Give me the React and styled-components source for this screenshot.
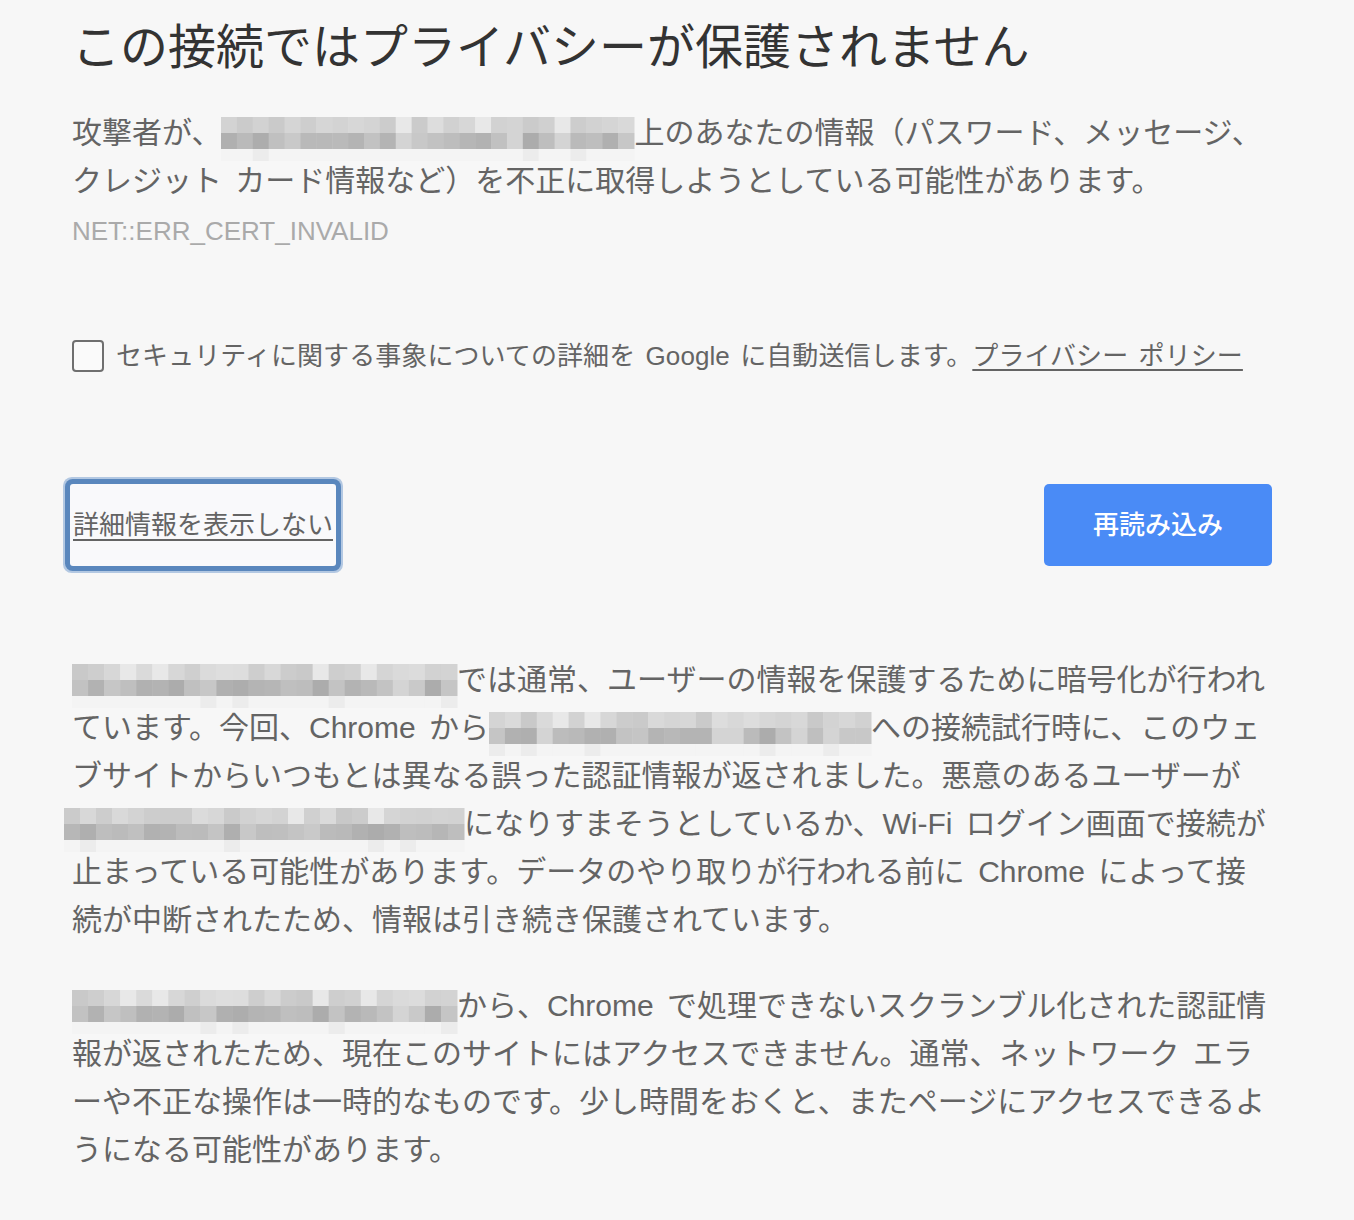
import React from 'react';
import styled, { createGlobalStyle } from 'styled-components';

const GlobalStyle = createGlobalStyle`
  html, body {
    margin: 0;
    padding: 0;
    background: #f7f7f7;
  }
  body {
    font-family: "Liberation Sans", "Noto Sans CJK JP", sans-serif;
    color: #646464;
  }
`;

const Page = styled.div`
  width: 1200px;
  margin-left: 72px;
  padding-top: 18px;
  padding-bottom: 46px;
  line-break: normal;
`;

const Heading = styled.h1`
  margin: 0;
  font-size: 48px;
  line-height: 60px;
  font-weight: normal;
  color: #333;
`;

const Paragraph = styled.p`
  margin: ${p => p.$top || 0}px 0 0;
  font-size: 30px;
  line-height: 48px;
  word-spacing: 5px;
`;

const ErrorCode = styled.div`
  margin-top: 2px;
  font-size: 26px;
  line-height: 48px;
  color: #aaaaaa;
`;

const CheckRow = styled.label`
  display: flex;
  align-items: center;
  gap: 12px;
  margin-top: 77px;
  height: 48px;
  font-size: 26px;
  line-height: 48px;
  word-spacing: 3px;
  letter-spacing: 0.08px;
`;

const Check = styled.input`
  appearance: none;
  margin: 0;
  width: 32px;
  height: 32px;
  box-sizing: border-box;
  border: 2px solid #6f6f6f;
  border-radius: 4px;
  background: #fafafa;
  flex: none;
`;

const Link = styled.a`
  color: inherit;
  text-decoration: underline;
  text-decoration-thickness: 2px;
  text-underline-offset: 4px;
`;

const ButtonRow = styled.div`
  display: flex;
  justify-content: space-between;
  align-items: center;
  margin-top: 104px;
`;

const DetailsButton = styled.button`
  height: 82px;
  margin-left: -2px;
  padding: 0 3px 5px 3px;
  border: none;
  border-radius: 3px;
  background: #f9f9fb;
  font-family: inherit;
  font-size: 26px;
  color: #646464;
  text-decoration: underline;
  text-decoration-thickness: 2px;
  text-underline-offset: 5px;
  box-shadow: 0 0 0 5px #5a87bd, 0 0 0 7px #b3c8e2;
  cursor: pointer;
`;

const ReloadButton = styled.button`
  width: 228px;
  height: 82px;
  padding: 0 0 5px;
  border: none;
  border-radius: 5px;
  background: #4a8bf6;
  font-family: inherit;
  font-size: 26px;
  font-weight: 500;
  color: #fff;
  cursor: pointer;
`;

const MosaicBox = styled.span`
  display: inline-block;
  vertical-align: -6px;
  width: ${p => p.$width}px;
  height: 32px;
  margin-left: ${p => p.$shift || 0}px;
  word-spacing: 0;

  svg {
    display: block;
    overflow: visible;
  }
`;

const makeRand = seed => {
  let s = seed;
  return () => {
    s = (s * 9301 + 49297) % 233280;
    return s / 233280;
  };
};

// pixelated redaction of the site address
const Mosaic = ({ width, seed, shift }) => {
  const next = makeRand(seed);
  const cols = Math.round(width / 16);
  const cw = width / cols;
  const cells = [];
  for (let r = 0; r < 3; r++) {
    for (let c = 0; c < cols; c++) {
      const v = next();
      const odd = next();
      let g;
      if (r === 0) g = odd > 0.9 ? 232 : 200 + v * 22;
      else if (r === 1) g = odd > 0.9 ? 212 : 172 + v * 30;
      else g = odd > 0.85 ? 236 : 244;
      g = Math.round(g);
      cells.push(
        <rect
          key={`${r}-${c}`}
          x={c * cw}
          y={r * 16}
          width={cw + 0.5}
          height={r === 2 ? 12 : 16}
          fill={`rgb(${g},${g},${g})`}
        />
      );
    }
  }
  return (
    <MosaicBox $width={width} $shift={shift}>
      <svg width={width} height={44}>{cells}</svg>
    </MosaicBox>
  );
};

export default function App() {
  return (
    <>
      <GlobalStyle />
      <Page>
        <Heading>この接続ではプライバシーが保護されません</Heading>
        <Paragraph $top={31}>
          攻撃者が、<Mosaic width={413} seed={7} />上のあなたの情報（パスワード、メッセージ、クレジット カード情報など）を不正に取得しようとしている可能性があります。
        </Paragraph>
        <ErrorCode>NET::ERR_CERT_INVALID</ErrorCode>

        <CheckRow>
          <Check type="checkbox" />
          <span>
            セキュリティに関する事象についての詳細を Google に自動送信します。<Link href="#">プライバシー ポリシー</Link>
          </span>
        </CheckRow>

        <ButtonRow>
          <DetailsButton>詳細情報を表示しない</DetailsButton>
          <ReloadButton>再読み込み</ReloadButton>
        </ButtonRow>

        <Paragraph $top={90}>
          <Mosaic width={385} seed={21} />では通常、ユーザーの情報を保護するために暗号化が行われています。今回、Chrome から<Mosaic width={382} seed={33} />への接続試行時に、このウェブサイトからいつもとは異なる誤った認証情報が返されました。悪意のあるユーザーが<Mosaic width={400} seed={48} shift={-8} />になりすまそうとしているか、Wi-Fi ログイン画面で接続が止まっている可能性があります。データのやり取りが行われる前に Chrome によって接続が中断されたため、情報は引き続き保護されています。
        </Paragraph>
        <Paragraph $top={38}>
          <Mosaic width={385} seed={21} />から、Chrome で処理できないスクランブル化された認証情報が返されたため、現在このサイトにはアクセスできません。通常、ネットワーク エラーや不正な操作は一時的なものです。少し時間をおくと、またページにアクセスできるようになる可能性があります。
        </Paragraph>
      </Page>
    </>
  );
}
